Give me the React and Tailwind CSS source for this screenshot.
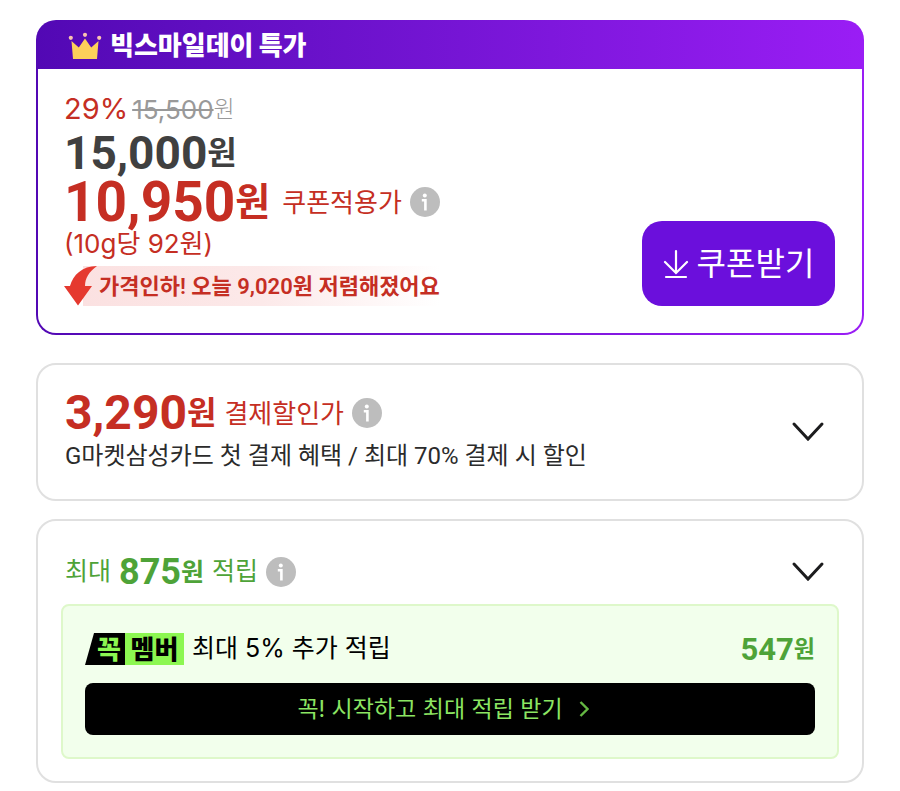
import React, { useState } from "react"

function CrownIcon() {
  return (
    <svg width="34" height="28" viewBox="0 0 34 28" aria-hidden="true">
      <path d="M3.5 9L10.8 15.5L17 6.5L23.2 15.5L30.5 9L29 27H5Z" fill="#fdd05a" />
      <circle cx="2.8" cy="5.8" r="2.1" fill="#f9c3b0" />
      <circle cx="17" cy="2.8" r="2.1" fill="#f9c3b0" />
      <circle cx="31.2" cy="5.8" r="2.1" fill="#f9c3b0" />
    </svg>
  )
}

function InfoButton({ label }) {
  return (
    <button type="button" aria-label={label} className="shrink-0">
      <svg width="30" height="30" viewBox="0 0 30 30" fill="none">
        <circle cx="15" cy="15" r="15" fill="#bdbdbd" />
        <circle cx="14.8" cy="8.4" r="2" fill="white" />
        <path d="M11.8 13.2H15.4V23.5" stroke="white" strokeWidth="2.6" />
      </svg>
    </button>
  )
}

function ToggleButton({ label }) {
  const [open, setOpen] = useState(false)

  return (
    <button type="button" aria-label={label} aria-expanded={open} onClick={() => setOpen(!open)} className="shrink-0">
      <svg width="34" height="22" viewBox="0 0 34 22" fill="none">
        <path d="M3 3L17 18L31 3" stroke="#1c1c1e" strokeWidth="3" strokeLinecap="round" />
      </svg>
    </button>
  )
}

function SpecialPriceCard() {
  return (
    <section className="rounded-[20px] bg-linear-to-r from-[#5208b4] to-[#9a1df5] p-[2px]">
      <h2 className="flex h-[47px] items-center gap-2 px-[30px] text-[26px] leading-8 font-black text-white">
        <CrownIcon />
        빅스마일데이 특가
      </h2>
      <div className="flex items-end justify-between rounded-b-[18px] bg-white pt-5 pr-[27px] pb-[27px] pl-[26px]">
        <div className="text-[#c52e23]">
          <p className="flex h-10 items-center gap-1">
            <span className="text-[29px]">29%</span>
            <del className="flex items-center text-[26px] text-[#999999] no-underline">
              <span className="line-through">15,500</span>
              <span className="text-[23px] font-light">원</span>
            </del>
          </p>
          <p className="flex h-[47px] items-center font-[Roboto,'Noto_Sans_CJK_KR',sans-serif] text-[46px] leading-none font-bold text-[#404040]">
            15,000<span className="text-[32px] leading-none">원</span>
          </p>
          <p className="flex h-[52px] items-center">
            <strong className="flex items-center font-[Roboto,'Noto_Sans_CJK_KR',sans-serif] text-[55px] leading-none font-bold">
              10,950<span className="text-[38px] leading-none">원</span>
            </strong>
            <span className="mr-2 ml-3 text-[26px]">쿠폰적용가</span>
            <InfoButton label="쿠폰적용가 안내" />
          </p>
          <p className="text-[26px] leading-8">(10g당 92원)</p>
          <p className="mt-[6px] flex h-10 items-center">
            <svg width="35" height="40" viewBox="0 0 35 40" className="relative z-10 shrink-0" aria-hidden="true">
              <path d="M0 20H6C9 9 18 0 33 0C25 6 21 12 21 20H28L14 39.500Z" fill="#e5392f" />
            </svg>
            <span className="-ml-4 flex h-10 items-center bg-linear-to-r from-[#fbe1e1] via-[#fce9e9] to-white pl-4 font-[Roboto,'Noto_Sans_CJK_KR',sans-serif] text-[22px] font-semibold">
              가격인하! 오늘 9,020원 저렴해졌어요
            </span>
          </p>
        </div>
        <button
          type="button"
          className="flex h-[85px] w-[193px] shrink-0 items-center justify-center gap-2 rounded-[20px] bg-[#6b0fdc] text-[32px] text-white"
        >
          <svg width="26" height="30" viewBox="0 0 26 30" fill="none" aria-hidden="true">
            <path d="M13 2V23M2 13L13 24L24 13M3 28H23" stroke="white" strokeWidth="2.2" strokeLinecap="round" />
          </svg>
          쿠폰받기
        </button>
      </div>
    </section>
  )
}

function PaymentDiscountCard() {
  return (
    <section className="mt-7 flex items-center justify-between rounded-[20px] border-2 border-[#e0e0e0] py-6 pr-[37px] pl-[27px]">
      <div>
        <p className="flex h-12 items-center text-[#c52e23]">
          <strong className="flex items-center font-[Roboto,'Noto_Sans_CJK_KR',sans-serif] text-[48px] leading-none font-bold">
            3,290<span className="text-[32px] leading-none">원</span>
          </strong>
          <span className="mx-2 text-[26px]">결제할인가</span>
          <InfoButton label="결제할인가 안내" />
        </p>
        <p className="font-[Roboto,'Noto_Sans_CJK_KR',sans-serif] text-[24px] leading-[38px] text-[#2b2b2b]">
          G마켓삼성카드 첫 결제 혜택 / 최대 70% 결제 시 할인
        </p>
      </div>
      <ToggleButton label="결제 할인 자세히 보기" />
    </section>
  )
}

function RewardCard() {
  return (
    <section className="mt-[18px] rounded-[20px] border-2 border-[#e0e0e0] px-[23px] pt-[30px] pb-[22px]">
      <div className="flex h-[42px] items-center justify-between pr-[14px] pl-1">
        <p className="flex items-center text-[25px] text-[#4ea338]">
          최대
          <strong className="mx-2 flex items-center font-[Roboto,'Noto_Sans_CJK_KR',sans-serif] text-[36px] leading-none font-bold">
            875<span className="text-[25px] leading-none">원</span>
          </strong>
          적립
          <span className="ml-2 flex">
            <InfoButton label="적립 안내" />
          </span>
        </p>
        <ToggleButton label="적립 자세히 보기" />
      </div>

      <div className="mt-[11px] rounded-lg border-2 border-[#def8ca] bg-[#f2ffec] px-[22px] pt-[27px] pb-[22px]">
        <div className="flex h-8 items-center justify-between">
          <div className="flex items-center text-[25px] text-black">
            <span className="mr-2 flex h-8 items-center text-[26px] font-black">
              <span className="flex h-8 w-10 items-center justify-end bg-black pr-1 text-[#8cf751] [clip-path:polygon(9px_0,100%_0,100%_100%,0_100%)]">
                꼭
              </span>
              <span className="flex h-8 w-[59px] items-center justify-center bg-[#8cf751]">멤버</span>
            </span>
            최대 5% 추가 적립
          </div>
          <strong className="flex items-center font-[Roboto,'Noto_Sans_CJK_KR',sans-serif] text-[31px] leading-none font-bold text-[#4ea338]">
            547<span className="text-[23px] leading-none">원</span>
          </strong>
        </div>
        <button
          type="button"
          className="mt-[18px] flex h-[52px] w-full items-center justify-center gap-4 rounded-lg bg-black pr-[14px] text-[23px] text-[#8ce563]"
        >
          꼭! 시작하고 최대 적립 받기
          <svg width="10" height="18" viewBox="0 0 10 18" fill="none" aria-hidden="true">
            <path d="M1.500 2L8.500 9L1.500 16" stroke="#65b843" strokeWidth="2.400" />
          </svg>
        </button>
      </div>
    </section>
  )
}

export default function App() {
  return (
    <main className="bg-white px-9 pt-5 pb-2 font-[Inter,'Noto_Sans_CJK_KR',sans-serif] whitespace-nowrap">
      <SpecialPriceCard />
      <PaymentDiscountCard />
      <RewardCard />
    </main>
  )
}
